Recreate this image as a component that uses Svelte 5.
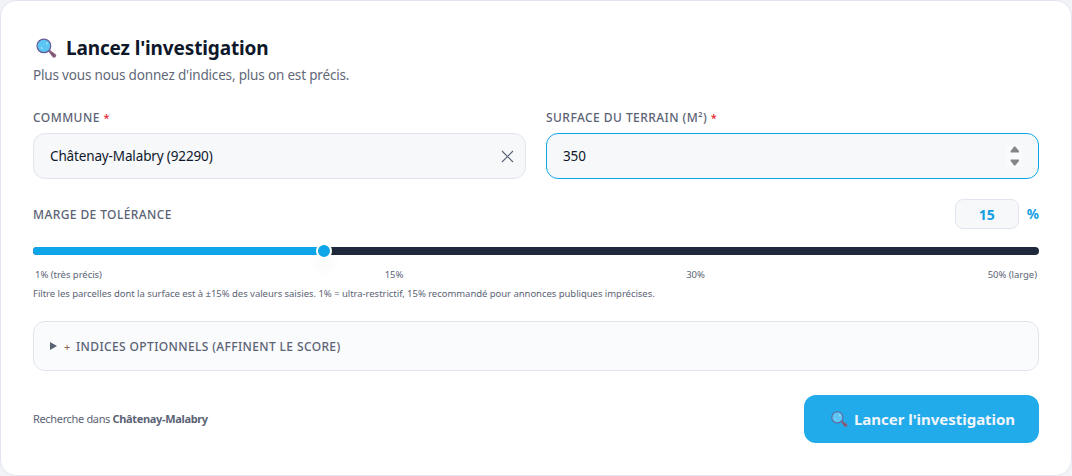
<script lang="ts">
	const min = 1;
	const max = 50;

	let commune = $state("Châtenay-Malabry (92290)");
	let surface = $state(350);
	let tolerance = $state(15);

	const communeName = $derived(commune.replace(/\s*\(.*\)$/, ""));
	const ratio = $derived((tolerance - min) / (max - min));
	// the thumb centre stays inside the track ends
	const thumbLeft = $derived(`calc(8px + (100% - 16px) * ${ratio})`);

	function step(delta: number) {
		surface = Math.max(0, surface + delta);
	}
</script>

{#snippet magnifier(size: number)}
	<svg class="magnifier" width={size} height={size} viewBox="0 0 20 20" aria-hidden="true">
		<path d="M11.6 12.6l1.4-1.4 5.7 4.2c1.9 1.8-1.1 4.6-2.9 2.8z" fill="#8b607f" />
		<path d="M14.2 14.4l2.7 2.6" stroke="#755570" stroke-width="1.3" />
		<circle cx="7.5" cy="7.5" r="6.5" fill="#5bc5f4" stroke="#665f98" stroke-width="1.2" />
		<path d="M10.4 4.2v1.6M5 9.2l.7.7" stroke="#b9eaff" stroke-width="1" stroke-linecap="round" />
	</svg>
{/snippet}

<form class="card" onsubmit={(e) => e.preventDefault()}>
	<header>
		<h2>{@render magnifier(21)}<span>Lancez l'investigation</span></h2>
		<p class="subtitle">Plus vous nous donnez d'indices, plus on est précis.</p>
	</header>

	<div class="fields">
		<div class="field">
			<label class="label" for="commune">Commune <span class="required">*</span></label>
			<div class="control">
				<input id="commune" type="text" bind:value={commune} />
				<button class="clear" type="button" aria-label="Effacer" onclick={() => (commune = "")}>
					<svg width="13" height="13" viewBox="0 0 13 13">
						<path d="M1 1l11 11M12 1L1 12" stroke="#596375" stroke-width="1.1" />
					</svg>
				</button>
			</div>
		</div>
		<div class="field">
			<label class="label" for="surface">Surface du terrain (m²) <span class="required">*</span></label>
			<div class="control active">
				<input id="surface" type="text" inputmode="numeric" bind:value={surface} />
				<div class="spinner">
					<button type="button" aria-label="Plus" onclick={() => step(1)}>
						<svg width="10" height="7" viewBox="0 0 10 7"><path d="M4.2.6h1L9 5v1.4H.6V5z" fill="#858585" /></svg>
					</button>
					<button type="button" aria-label="Moins" onclick={() => step(-1)}>
						<svg width="10" height="7" viewBox="0 0 10 7"><path d="M4.2 6.4h1L9 2V.6H.6V2z" fill="#858585" /></svg>
					</button>
				</div>
			</div>
		</div>
	</div>

	<div class="tolerance-head">
		<span class="label tolerance-label">Marge de tolérance</span>
		<div class="percent">
			<input type="text" aria-label="Tolérance" bind:value={tolerance} />
			<span>%</span>
		</div>
	</div>

	<div class="slider">
		<div class="fill" style:width={thumbLeft}></div>
		<div class="thumb" style:left={thumbLeft}></div>
	</div>
	<div class="ticks">
		<span>1% (très précis)</span>
		<span>15%</span>
		<span>30%</span>
		<span>50% (large)</span>
	</div>
	<p class="hint">
		Filtre les parcelles dont la surface est à ±{tolerance}% des valeurs saisies. 1% = ultra-restrictif, 15% recommandé pour annonces publiques imprécises.
	</p>

	<div class="optional">
		<svg width="7" height="8" viewBox="0 0 7 8"><path d="M0 0l7 4-7 4z" fill="#596273" /></svg>
		<span class="plus">+</span>
		<span class="label optional-label">Indices optionnels (affinent le score)</span>
	</div>

	<footer>
		<p class="scope">Recherche dans <strong>{communeName}</strong></p>
		<button class="submit" type="submit">{@render magnifier(17)}<span>Lancer l'investigation</span></button>
	</footer>
</form>

<style>
	:global(body) {
		margin: 0;
		background: #f1f3f6;
	}

	.card {
		box-sizing: border-box;
		width: 1072px;
		height: 476px;
		padding: 34px 32px 32px;
		border: 1px solid #e2e5f0;
		border-radius: 16px;
		background: #fff;
		color: #0f172a;
		font-family: "Noto Sans", "Open Sans", sans-serif;
	}

	h2,
	p {
		margin: 0;
	}

	button {
		padding: 0;
		border: 0;
		background: none;
		font: inherit;
		cursor: pointer;
	}

	svg {
		display: block;
		flex: none;
	}

	h2 {
		display: flex;
		align-items: center;
		gap: 9px;
		height: 26px;
		padding-left: 3px;
		font-size: 19px;
		font-weight: 700;
		letter-spacing: -0.14px;
		white-space: nowrap;
	}

	.subtitle {
		height: 20px;
		margin-top: 4px;
		color: #626878;
		font-size: 13.5px;
		line-height: 20px;
		letter-spacing: -0.17px;
	}

	.fields {
		display: grid;
		grid-template-columns: 1fr 1fr;
		gap: 20px;
		margin-top: 24px;
	}

	.label {
		display: block;
		height: 18px;
		color: #5b6375;
		font-size: 12px;
		font-weight: 500;
		line-height: 18px;
		letter-spacing: 0.45px;
		text-transform: uppercase;
		white-space: nowrap;
	}

	.required {
		color: #e11d30;
		font-size: 11px;
	}

	.control {
		display: flex;
		align-items: center;
		box-sizing: border-box;
		height: 46px;
		margin-top: 6px;
		padding: 0 11px 0 16px;
		border: 1px solid #e2e5ee;
		border-radius: 12px;
		background: #f6f8fa;
	}

	.control.active {
		padding-right: 16px;
		border-color: #0ea5e9;
	}

	input {
		min-width: 0;
		padding: 0;
		border: 0;
		outline: 0;
		background: none;
		color: #0f172a;
		font: 13.5px "Noto Sans", "Open Sans", sans-serif;
	}

	.control input {
		flex: 1;
		letter-spacing: -0.14px;
	}

	.spinner {
		display: flex;
		flex-direction: column;
		align-items: center;
		justify-content: space-between;
		box-sizing: border-box;
		width: 15px;
		height: 20px;
		background: #fafbfc;
	}

	.tolerance-head {
		display: flex;
		align-items: center;
		justify-content: space-between;
		height: 30px;
		margin-top: 20px;
	}

	.tolerance-label {
		padding-top: 2px;
		letter-spacing: 0.4px;
	}

	.percent {
		display: flex;
		align-items: center;
		gap: 8px;
		color: #139fe2;
		font-size: 13.5px;
		font-weight: 700;
	}

	.percent input {
		box-sizing: border-box;
		width: 64px;
		height: 30px;
		border: 1px solid #e2e5ee;
		border-radius: 8px;
		background: #f6f8fa;
		color: #139fe2;
		font-size: 14px;
		font-weight: 700;
		text-align: center;
	}

	.slider {
		position: relative;
		height: 8px;
		margin-top: 18px;
		border-radius: 4px;
		background: #1e293b;
	}

	.fill {
		height: 8px;
		border-radius: 4px 0 0 4px;
		background: #0ea5e9;
	}

	.thumb {
		position: absolute;
		top: 50%;
		box-sizing: border-box;
		width: 16px;
		height: 16px;
		border: 2px solid #fff;
		border-radius: 50%;
		background: #0ea5e9;
		box-shadow: 0 10px 15px -3px rgba(14, 60, 100, 0.1);
		transform: translate(-50%, -50%);
	}

	.ticks {
		display: flex;
		justify-content: space-between;
		height: 15px;
		margin-top: 12px;
		padding: 0 2px;
		color: #5b6375;
		font-size: 9.5px;
		line-height: 15px;
		letter-spacing: -0.04px;
	}

	.hint {
		height: 15px;
		margin-top: 4px;
		color: #5b6375;
		font-size: 9.5px;
		line-height: 15px;
		letter-spacing: -0.04px;
		white-space: nowrap;
	}

	.optional {
		display: flex;
		align-items: center;
		box-sizing: border-box;
		height: 50px;
		margin-top: 20px;
		padding: 0 16px;
		border: 1px solid #e2e5ee;
		border-radius: 12px;
		background: #fafbfd;
	}

	.optional-label {
		padding-top: 2px;
		letter-spacing: 0.37px;
	}

	.plus {
		width: 12px;
		margin-left: 7px;
		padding-top: 1px;
		color: #8d5f4c;
		font-size: 11px;
	}

	footer {
		display: flex;
		align-items: center;
		justify-content: space-between;
		margin-top: 24px;
	}

	.scope {
		padding-bottom: 2px;
		color: #5b6375;
		font-size: 11px;
		letter-spacing: -0.34px;
	}

	.submit {
		display: flex;
		align-items: center;
		gap: 6px;
		box-sizing: border-box;
		width: 235px;
		height: 48px;
		padding-left: 27px;
		border-radius: 12px;
		background: #21abea;
		color: #f0f5fa;
		font-size: 15px;
		font-weight: 700;
		letter-spacing: -0.03px;
		white-space: nowrap;
	}
</style>
